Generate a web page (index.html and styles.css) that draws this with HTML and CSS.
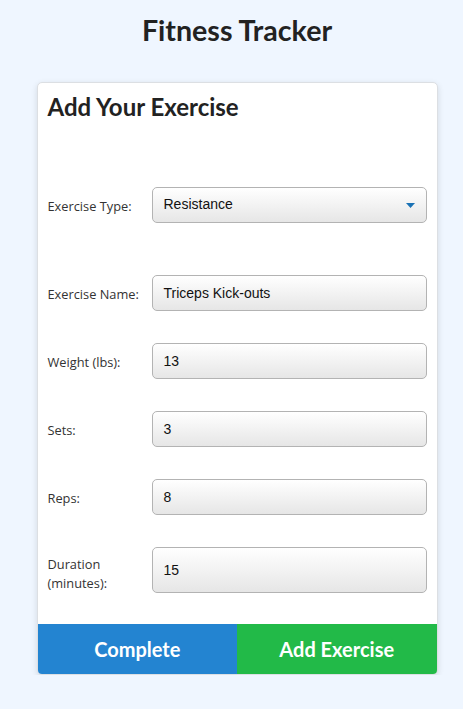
FILE: index.html
```html
<!DOCTYPE html>
<html lang="en">
<head>
<meta charset="utf-8">
<title>Fitness Tracker</title>
<link rel="stylesheet" href="styles.css">
</head>
<body>
<h1 class="title">Fitness Tracker</h1>
<div class="card">
  <div class="card-body">
    <h2 class="card-title">Add Your Exercise</h2>
    <div class="row row-type">
      <label class="label">Exercise Type:</label>
      <div class="select">
        <span class="field-text">Resistance</span>
        <svg class="arrow" width="9" height="5" viewBox="0 0 9 5"><path d="M0 0H9L4.5 5Z" fill="#1a72b5"/></svg>
      </div>
    </div>
    <div class="row row-first">
      <label class="label">Exercise Name:</label>
      <div class="field"><span class="field-text">Triceps Kick-outs</span></div>
    </div>
    <div class="row">
      <label class="label">Weight (lbs):</label>
      <div class="field"><span class="field-text">13</span></div>
    </div>
    <div class="row">
      <label class="label">Sets:</label>
      <div class="field"><span class="field-text">3</span></div>
    </div>
    <div class="row">
      <label class="label">Reps:</label>
      <div class="field"><span class="field-text">8</span></div>
    </div>
    <div class="row">
      <label class="label label-multi">Duration<br>(minutes):</label>
      <div class="field field-tall"><span class="field-text">15</span></div>
    </div>
  </div>
  <div class="actions">
    <button class="btn btn-complete">Complete</button>
    <button class="btn btn-add">Add Exercise</button>
  </div>
</div>
</body>
</html>
```
FILE: styles.css
```css
* { box-sizing: border-box; }
body {
  margin: 0;
  padding-left: 11px;
  background: #eff6ff;
  font-family: Lato, "Open Sans", sans-serif;
  color: #222;
}
.title {
  margin: 0;
  padding-top: 12px;
  height: 82px;
  text-align: center;
  font-size: 28.6px;
  font-weight: 700;
  line-height: 36px;
  color: #222;
}
.card {
  width: 401px;
  margin: 0 auto;
  background: #fff;
  border: 1px solid #dcdfe3;
  border-radius: 5px;
  box-shadow: 0 2px 6px rgba(0,0,0,0.12);
  overflow: hidden;
}
.card-body {
  padding: 10px 10px 31px 10px;
}
.card-title {
  margin: 0;
  font-size: 24px;
  font-weight: 700;
  line-height: 28px;
  color: #222;
}
.row {
  display: flex;
  align-items: center;
  margin-top: 32px;
}
.row-type { margin-top: 66px; }
.row.row-first { margin-top: 52px; }
.label {
  width: 104px;
  flex: none;
  padding-top: 3px;
  font-family: "Open Sans", sans-serif;
  font-size: 12.8px;
  line-height: 19px;
  color: #333;
}
.label-multi { padding-top: 8px; }
.field, .select {
  flex: 1;
  height: 36px;
  display: flex;
  align-items: center;
  padding: 0 11px;
  border: 1px solid #b3b3b3;
  border-radius: 5px;
  background: linear-gradient(#ffffff, #e6e6e6);
}
.field-tall { height: 46px; }
.select { justify-content: space-between; }
.field-text {
  font-family: "Liberation Sans", Arial, sans-serif;
  font-size: 14px;
  color: #111;
}
.select .field-text { margin-top: -2px; }
.actions {
  display: flex;
}
.btn {
  flex: 1;
  height: 50px;
  border: none;
  font-family: Lato, sans-serif;
  font-size: 20px;
  font-weight: 700;
  color: #fff;
  padding: 0;
}
.btn-complete { background: #2384d1; }
.btn-add { background: #22ba48; }
```
